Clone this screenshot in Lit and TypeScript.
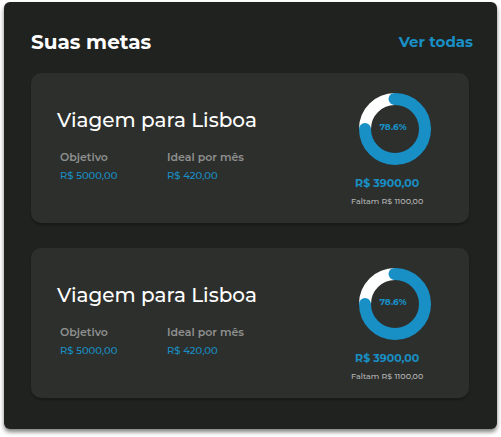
import { LitElement, html, css } from "lit";
import { customElement, property } from "lit/decorators.js";

interface Goal {
  title: string;
  target: string;
  monthly: string;
  saved: string;
  missing: string;
  percent: string;
}

const goals: Goal[] = [
  { title: "Viagem para Lisboa", target: "R$ 5000,00", monthly: "R$ 420,00", saved: "R$ 3900,00", missing: "Faltam R$ 1100,00", percent: "78.6%" },
  { title: "Viagem para Lisboa", target: "R$ 5000,00", monthly: "R$ 420,00", saved: "R$ 3900,00", missing: "Faltam R$ 1100,00", percent: "78.6%" },
];

@customElement("goal-ring")
export class GoalRing extends LitElement {
  @property() label = "";

  static styles = css`
    :host {
      display: grid;
      place-items: center;
      width: 72px;
      height: 72px;
    }
    svg,
    .label {
      grid-area: 1 / 1;
    }
    .label {
      font-size: 9px;
      line-height: 12px;
      font-weight: 700;
      color: #188fc5;
      margin: 0 4px 4px 0;
    }
    .track,
    .value {
      fill: none;
      stroke-width: 12;
    }
    .track {
      stroke: #ffffff;
    }
    .value {
      stroke: #188fc5;
      stroke-linecap: round;
    }
  `;

  render() {
    return html`
      <svg width="72" height="72" viewBox="0 0 72 72" aria-hidden="true">
        <path class="track" d="M6 36 A30 30 0 0 1 36 6"></path>
        <path class="value" d="M35.5 6 A30 30 0 1 1 6 36"></path>
      </svg>
      <span class="label">${this.label}</span>
    `;
  }
}

@customElement("goal-card")
export class GoalCard extends LitElement {
  @property({ attribute: false }) goal!: Goal;

  static styles = css`
    :host {
      display: block;
    }
    .card {
      display: flex;
      justify-content: space-between;
      padding: 20px 38px 13px 26px;
      border-radius: 10px;
      background: #2d2f2d;
      box-shadow: 0 2px 2px rgba(0, 0, 0, 0.25);
    }
    h2 {
      margin: 13px 0 14px;
      font-size: 20px;
      line-height: 28px;
      font-weight: 500;
      color: #ffffff;
      white-space: nowrap;
    }
    .facts {
      display: grid;
      grid-template-columns: 107px auto;
      margin: 0;
      padding-left: 3px;
      white-space: nowrap;
    }
    dt {
      font-size: 11px;
      line-height: 18px;
      font-weight: 600;
      color: #8e8f8e;
    }
    dd {
      margin: 0;
      font-size: 10px;
      line-height: 20px;
      font-weight: 500;
      color: #188fc5;
    }
    .progress {
      display: flex;
      flex-direction: column;
      width: 80px;
      white-space: nowrap;
    }
    goal-ring {
      align-self: flex-end;
    }
    .amounts {
      align-self: flex-start;
      text-align: center;
      margin-top: 9px;
    }
    .saved {
      margin: 0;
      font-size: 11px;
      line-height: 18px;
      font-weight: 700;
      color: #188fc5;
    }
    .missing {
      margin: 0;
      font-size: 8px;
      line-height: 18px;
      font-weight: 500;
      color: #b5b6b5;
    }
  `;

  render() {
    const g = this.goal;
    return html`
      <article class="card">
        <div>
          <h2>${g.title}</h2>
          <dl class="facts">
            <div>
              <dt>Objetivo</dt>
              <dd>${g.target}</dd>
            </div>
            <div>
              <dt>Ideal por mês</dt>
              <dd>${g.monthly}</dd>
            </div>
          </dl>
        </div>
        <div class="progress">
          <goal-ring .label=${g.percent}></goal-ring>
          <div class="amounts">
            <p class="saved">${g.saved}</p>
            <p class="missing">${g.missing}</p>
          </div>
        </div>
      </article>
    `;
  }
}

@customElement("app-root")
export class AppRoot extends LitElement {
  static styles = css`
    :host {
      display: block;
      padding: 2px 4px 8px;
      background: #ffffff;
      font-family: Montserrat, Inter, sans-serif;
    }
    .panel {
      padding: 26px 28px 31px 27px;
      border-radius: 6px;
      background: #20221f;
      box-shadow: 0 3px 4px rgba(0, 0, 0, 0.5);
    }
    header {
      display: flex;
      align-items: center;
      justify-content: space-between;
      margin: 0 -4px 17px 0;
    }
    h1 {
      margin: 0;
      font-size: 20px;
      line-height: 28px;
      font-weight: 700;
      color: #ffffff;
    }
    a {
      font-size: 15px;
      line-height: 24px;
      font-weight: 700;
      color: #188fc5;
      text-decoration: none;
    }
    .list {
      display: grid;
      gap: 25px;
    }
  `;

  render() {
    return html`
      <section class="panel">
        <header>
          <h1>Suas metas</h1>
          <a href="#metas">Ver todas</a>
        </header>
        <div class="list">${goals.map((g) => html`<goal-card .goal=${g}></goal-card>`)}</div>
      </section>
    `;
  }
}
